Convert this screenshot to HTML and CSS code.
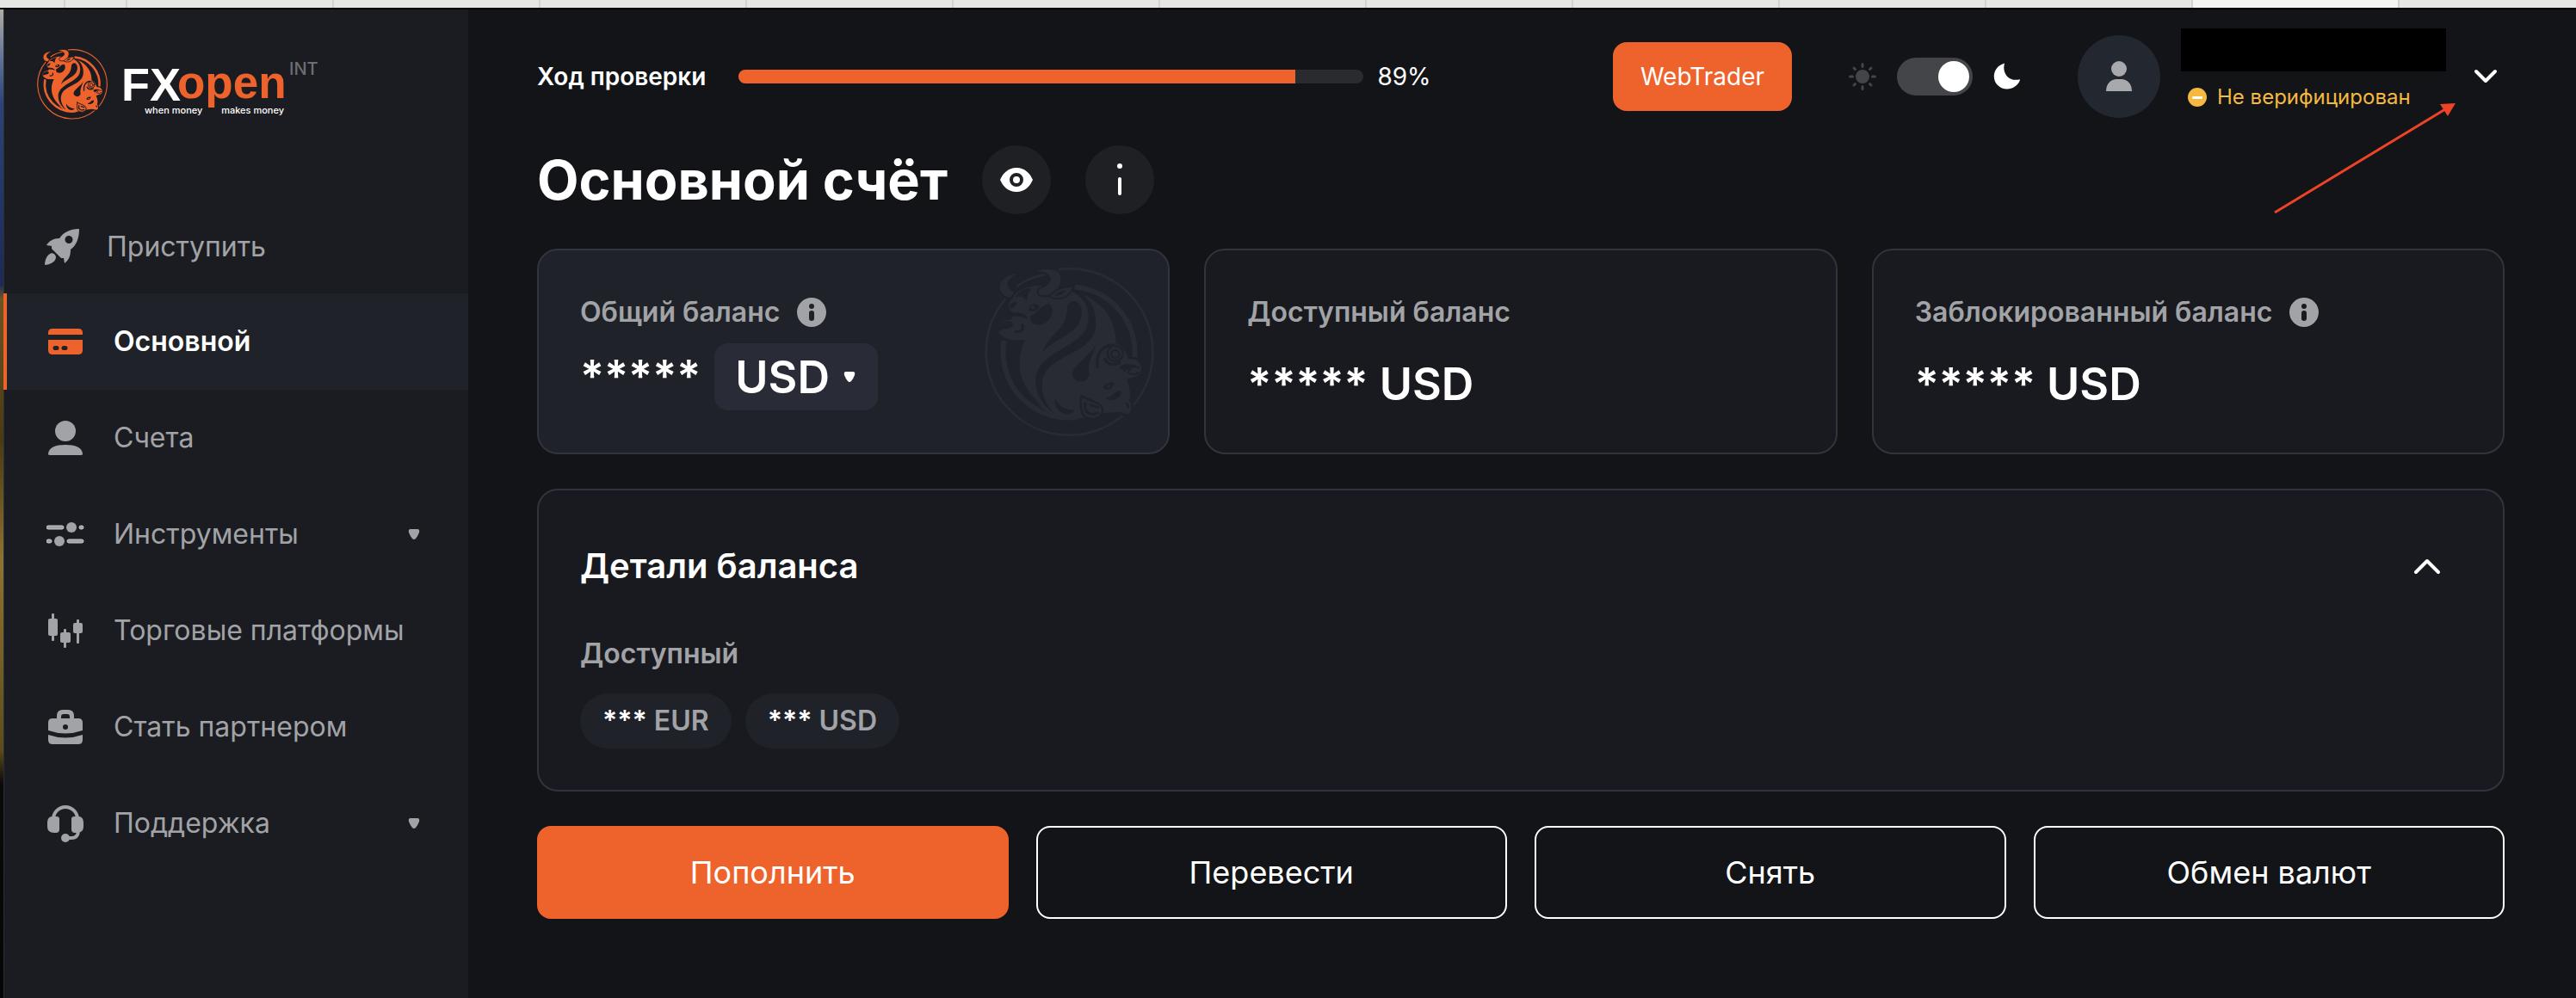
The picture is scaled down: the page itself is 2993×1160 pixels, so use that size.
FILE: index.html
```html
<!DOCTYPE html>
<html lang="ru">
<head>
<meta charset="utf-8">
<title>FXOpen — Основной счёт</title>
<meta name="viewport" content="width=device-width, initial-scale=1">
<link rel="stylesheet" href="styles.css">
</head>
<body>
<svg class="defs" aria-hidden="true">
  <symbol id="emblem" viewBox="75 92 590 592">
    <g class="line">
      <path d="M332 99A290 290 0 0 1 594 572M556 609A290 290 0 0 1 164 592A290 290 0 0 1 147 201M186 160Q230 122 312 112" stroke-width="8"/>
      <path d="M388 160A229 229 0 0 1 598 405M142 347A229 229 0 0 0 400 614" stroke-width="18"/>
    </g>
    <path class="ink" d="M168 205C185 160 260 145 330 162L425 190C495 222 535 285 532 356C560 365 570 400 578 412C612 405 628 440 618 460C608 478 575 474 570 486C580 505 588 540 578 556C592 575 588 602 572 603C555 602 548 594 535 596C510 600 492 598 484 604C470 624 440 624 425 616C380 628 320 618 285 590C190 520 165 420 215 345C180 352 145 345 125 322C112 295 135 275 165 274C175 262 175 256 176 250C150 240 155 215 168 205Z"/>
    <g class="cut">
      <path d="M275 388C300 320 362 310 362 235C366 198 410 200 413 245C414 325 320 335 275 388Z"/>
      <path d="M372 170C440 205 444 260 430 300C400 375 250 390 252 490C252 540 290 585 316 600C265 545 262 480 300 440C365 385 460 375 463 290C463 245 447 212 420 190Z"/>
      <path d="M215 345C184 410 184 500 275 574C165 530 152 420 160 347Z"/>
      <path d="M462 362C445 400 375 435 381 470C392 500 435 495 440 465C430 430 452 400 462 362Z"/>
      <path d="M234 262C262 250 270 222 300 220C325 235 305 295 258 292C235 290 232 275 234 262Z"/>
      <path d="M180 194C198 172 215 164 238 164C224 180 224 190 222 208C210 193 198 190 180 194Z"/>
      <path d="M122 302C132 276 172 272 174 290C170 310 140 300 122 316Z"/>
      <path d="M160 228C165 215 175 212 188 212C180 224 180 234 164 236Z"/>
      <path d="M165 252C190 246 220 252 224 272C205 262 190 262 165 262Z"/>
      <path d="M226 240C236 215 255 215 265 228C258 245 245 250 226 240Z"/>
      <path d="M320 550C335 580 360 588 388 590C380 612 322 612 319 556Z"/>
      <path d="M488 512C495 495 510 492 526 494C522 514 505 526 488 512Z"/>
      <path d="M500 546C525 545 525 522 548 522C560 540 530 562 500 552Z"/>
      <path d="M545 440C560 425 580 430 598 432C580 440 570 450 562 456Z"/>
      <path d="M566 566Q578 560 580 580Q574 590 566 566Z"/>
    </g>
    <g class="gap">
      <path d="M206 293Q214 318 182 316" stroke-width="9"/>
      <path d="M468 440C462 400 480 365 520 362M494 412C505 432 525 434 545 424" stroke-width="10"/>
      <path d="M412 540C445 560 482 560 487 592C478 630 425 628 414 600Q406 572 412 540Z" stroke-width="7"/>
      <path d="M426 565C418 595 440 612 468 600M445 573L470 580" stroke-width="9"/>
      <circle cx="530" cy="392" r="27" stroke-width="7"/>
      <circle cx="530" cy="394" r="14" stroke-width="6"/>
      <path d="M574 460Q590 425 612 442M582 462Q595 470 612 458" stroke-width="6"/>
    </g>
    <g class="horn">
      <path d="M202 112C140 106 112 150 130 180C142 196 158 200 168 198L180 176C148 168 142 132 202 112Z"/>
      <path d="M243 103C315 82 348 105 342 138C336 178 300 200 268 190C254 184 258 168 268 162C312 148 322 112 243 103Z"/>
      <path d="M300 194C318 166 350 160 386 156C372 192 345 212 300 194Z"/>
    </g>
    <path class="cut" d="M318 190Q335 172 358 170Q345 192 318 190Z"/>
    <circle class="ink" cx="243" cy="231" r="6"/>
    <circle class="ink" cx="507" cy="507" r="6"/>
  </symbol>
  <symbol id="caret" viewBox="0 0 18 18">
    <path fill="currentColor" d="M5 3h8q3 0 2 4q-2 5-4 7q-2 2-4 0q-2-2-4-7q-1-4 2-4z"/>
  </symbol>
  <symbol id="info" viewBox="0 0 34 34">
    <circle cx="17" cy="17" r="17" fill="currentColor"/>
    <circle class="cut" cx="17" cy="10" r="3"/>
    <rect class="cut" x="14" y="15" width="6" height="12" rx="3"/>
  </symbol>
</svg>

<div class="tabs" aria-hidden="true">
  <i class="tab tab--stub"></i><i class="tab tab--pin"></i><i class="tab"></i><i class="tab"></i><i class="tab"></i><i class="tab"></i><i class="tab"></i><i class="tab"></i><i class="tab"></i><i class="tab"></i><i class="tab"></i><i class="tab"></i><i class="tab tab--active"></i><i class="tab"></i>
</div>

<div class="app">
  <div class="desktop" aria-hidden="true"></div>

  <aside class="sidebar">
    <a class="logo" href="#" aria-label="FXOpen INT">
      <svg class="logo__emblem" aria-hidden="true"><use href="#emblem"/></svg>
      <svg class="logo__words" viewBox="0 0 232 82">
        <text class="logo__fx" x="-3" y="60">FX</text>
        <text class="logo__open" x="62" y="57">open</text>
        <text class="logo__tag" x="24" y="75">when money</text>
        <text class="logo__tag" x="186" y="75" text-anchor="end">makes money</text>
        <text class="logo__int" x="192" y="30">INT</text>
      </svg>
    </a>
    <nav class="nav">
      <a class="nav__item nav__item--start" href="#">
        <svg class="nav__icon" viewBox="0 0 44 44"><path fill="currentColor" fill-rule="evenodd" d="M42 1C31 1 24 5 19 12C12 12 7 15 4 20L10 21L10 24L21 35L24 35L25 41C30 37 32 33 32 25C39 20 42 12 42 1ZM30 9a4.500 4.500 0 1 1 0 9a4.500 4.500 0 0 1 0-9zM8 30C11 28 15 31 15 34C15 40 6 43 2 43C2 38 4 32 8 30Z"/></svg>
        <span>Приступить</span>
      </a>
      <a class="nav__item nav__item--active" href="#" aria-current="page">
        <svg class="nav__icon" viewBox="0 0 44 44"><path fill="currentColor" fill-rule="evenodd" d="M2 14V12Q2 7 7 7H37Q42 7 42 12V14ZM2 20H42V32Q42 37 37 37H7Q2 37 2 32ZM10 27a2.500 2.500 0 0 0 0 5h2a2.500 2.500 0 0 0 0-5zM20 27a2.500 2.500 0 0 0 0 5h2a2.500 2.500 0 0 0 0-5z"/></svg>
        <span>Основной</span>
      </a>
      <a class="nav__item" href="#">
        <svg class="nav__icon" viewBox="0 0 44 44"><g fill="currentColor"><circle cx="22" cy="14" r="12"/><path d="M2 41C2 33 11 30 22 30S42 33 42 41Q42 42 40 42H4Q2 42 2 41Z"/></g></svg>
        <span>Счета</span>
      </a>
      <a class="nav__item" href="#">
        <svg class="nav__icon" viewBox="0 0 44 44"><g fill="currentColor"><circle cx="29" cy="14" r="6"/><circle cx="15" cy="30" r="6"/></g><g fill="currentColor" stroke="#c6c7c9"><rect x="0" y="12" width="20" height="4" rx="2"/><rect x="38" y="12" width="5" height="4" rx="2"/><rect x="0" y="28" width="6" height="4" rx="2"/><rect x="24" y="28" width="19" height="4" rx="2"/></g></svg>
        <span>Инструменты</span>
        <svg class="nav__caret"><use href="#caret"/></svg>
      </a>
      <a class="nav__item" href="#">
        <svg class="nav__icon" viewBox="0 0 44 44"><g fill="currentColor"><rect x="2" y="8" width="11" height="20" rx="2"/><rect x="6" y="2" width="3" height="32" rx="1"/><rect x="16" y="24" width="12" height="12" rx="2"/><rect x="20" y="20" width="3" height="22" rx="1"/><rect x="31" y="13" width="11" height="12" rx="2"/><rect x="35" y="9" width="3" height="28" rx="1"/></g></svg>
        <span>Торговые платформы</span>
      </a>
      <a class="nav__item" href="#">
        <svg class="nav__icon" viewBox="0 0 44 44"><path fill="currentColor" fill-rule="evenodd" d="M12 12V9Q12 2 19 2H25Q32 2 32 9V12H37Q42 12 42 17V26Q22 33 2 26V17Q2 12 7 12ZM17 12H27V10Q27 7 24 7H20Q17 7 17 10ZM22 19a3 3 0 1 0 0 6a3 3 0 0 0 0-6zM2 31Q22 38 42 31V37Q42 42 37 42H7Q2 42 2 37Z"/></svg>
        <span>Стать партнером</span>
      </a>
      <a class="nav__item" href="#">
        <svg class="nav__icon" viewBox="0 0 44 44"><path d="M8 17A14 14 0 0 1 36 17M37 32Q36 39 29 39H24" fill="none" stroke="currentColor" stroke-width="4"/><g fill="currentColor"><path d="M6 14H12Q15 14 15 17V29Q15 33 11 33H9Q1 33 1 26V21Q1 15 6 14ZM38 14H32Q29 14 29 17V29Q29 33 33 33H35Q43 33 43 26V21Q43 15 38 14Z"/><circle cx="22" cy="39" r="5"/></g></svg>
        <span>Поддержка</span>
        <svg class="nav__caret"><use href="#caret"/></svg>
      </a>
    </nav>
  </aside>

  <main class="main">
    <header class="header">
      <span class="header__label" id="check">Ход проверки</span>
      <div class="progress" role="progressbar" aria-labelledby="check" aria-valuenow="89" aria-valuemin="0" aria-valuemax="100">
        <div class="progress__fill" style="width:89%"></div>
      </div>
      <span class="header__value">89%</span>
      <div class="tools">
        <button class="webtrader" type="button">WebTrader</button>
        <label class="theme">
          <svg class="theme__icon theme__icon--sun" viewBox="0 0 32 32" aria-hidden="true"><circle cx="16" cy="16" r="8" fill="currentColor"/><path d="M16 1.500v3M16 27.500v3M1.500 16h3M27.500 16h3M6 6l1.500 1.500M24.500 24.500L26 26M6 26l1.500-1.500M24.500 7.500L26 6" stroke="currentColor" stroke-width="3" stroke-linecap="round"/></svg>
          <input class="switch" type="checkbox" aria-label="Тёмная тема" checked>
          <svg class="theme__icon" viewBox="0 0 32 32" aria-hidden="true"><path fill="currentColor" d="M13 1C10 11 17 22 30 19.500Q31 19 31 20C27 31 13 34 5 26C-3 18 1 4 12 1Q13 0 13 1Z"/></svg>
        </label>
        <div class="avatar">
          <svg class="avatar__icon" viewBox="0 0 32 36" aria-hidden="true"><circle cx="16" cy="9" r="9" fill="currentColor"/><path fill="currentColor" d="M1 35C1 26 7 21 13 21H19C25 21 31 26 31 35Z"/></svg>
        </div>
        <div class="user">
          <div class="user__name"></div>
          <div class="user__status">
            <svg class="user__badge" viewBox="0 0 22 22" aria-hidden="true"><circle cx="11" cy="11" r="11" fill="currentColor"/><rect x="5" y="10" width="12" height="3" rx="1" fill="#fff"/></svg>
            <span>Не верифицирован</span>
          </div>
        </div>
        <button class="chevron" type="button" aria-label="Меню профиля">
          <svg class="chevron__icon" viewBox="0 0 32 32"><path d="M5 10L16 21L27 10"/></svg>
        </button>
      </div>
      <svg class="pointer" viewBox="0 0 216 132" aria-hidden="true"><path d="M4 129L202 9" stroke="currentColor" stroke-width="3"/><path fill="currentColor" d="M214 2L196 3L205 17Z"/></svg>
    </header>

    <div class="title">
      <h1 class="title__text">Основной счёт</h1>
      <button class="round" type="button" aria-label="Показать баланс">
        <svg class="round__icon" viewBox="0 0 40 40"><path fill="currentColor" fill-rule="evenodd" d="M20 6C30 6 36 13 39 20C36 27 30 34 20 34S4 27 1 20C4 13 10 6 20 6ZM20 12a8 8 0 1 0 0 16a8 8 0 0 0 0-16z"/><circle cx="20" cy="20" r="4" fill="currentColor"/></svg>
      </button>
      <button class="round" type="button" aria-label="Информация">
        <svg class="round__icon" viewBox="0 0 40 40"><circle cx="20" cy="4" r="3" fill="currentColor"/><rect x="18" y="17" width="4" height="21" rx="2" fill="currentColor"/></svg>
      </button>
    </div>

    <section class="cards">
      <article class="card card--total">
        <svg class="card__emblem" aria-hidden="true"><use href="#emblem"/></svg>
        <h2 class="card__label">Общий баланс <svg class="info"><use href="#info"/></svg></h2>
        <div class="amount">
          <span>*****</span>
          <span class="currency">
            <select class="currency__select" aria-label="Валюта"><option>USD</option></select>
            <svg class="currency__caret" aria-hidden="true"><use href="#caret"/></svg>
          </span>
        </div>
      </article>
      <article class="card">
        <h2 class="card__label">Доступный баланс</h2>
        <p class="amount amount--plain">***** USD</p>
      </article>
      <article class="card">
        <h2 class="card__label">Заблокированный баланс <svg class="info"><use href="#info"/></svg></h2>
        <p class="amount amount--plain">***** USD</p>
      </article>
    </section>

    <section class="panel">
      <div class="panel__head">
        <h2 class="panel__title">Детали баланса</h2>
        <button class="chevron" type="button" aria-label="Свернуть">
          <svg class="chevron__icon" viewBox="0 0 32 32"><path d="M3 23L16 10L29 23"/></svg>
        </button>
      </div>
      <h3 class="card__label">Доступный</h3>
      <div class="pills">
        <span class="pill"><b>***</b> EUR</span>
        <span class="pill"><b>***</b> USD</span>
      </div>
    </section>

    <div class="actions">
      <button class="action action--primary" type="button">Пополнить</button>
      <button class="action" type="button">Перевести</button>
      <button class="action" type="button">Снять</button>
      <button class="action" type="button">Обмен валют</button>
    </div>
  </main>
</div>
</body>
</html>
```
FILE: styles.css
```css
:root {
  --page: #131418;
  --side: #1b1c21;
  --card: #191a1f;
  --raised: #1f2229;
  --line: #30343e;
  --muted: #a2a3a6;
  --accent: #ee632c;
  --surface: var(--side);
}

* { box-sizing: border-box; }

body {
  margin: 0;
  min-height: 100vh;
  display: flex;
  flex-direction: column;
  background: var(--page);
  color: #fff;
  font-family: Inter, "Liberation Sans", sans-serif;
}

h1, h2, h3, p { margin: 0; }

button, select { font-family: inherit; color: inherit; cursor: pointer; }

a { color: inherit; text-decoration: none; }

.defs { position: absolute; width: 0; height: 0; }

/* Emblem inks */
.ink { fill: currentColor; }
.cut { fill: var(--surface); }
.line { fill: none; stroke: currentColor; }
.gap { fill: none; stroke: var(--surface); stroke-linecap: round; }
.horn { fill: currentColor; stroke: var(--surface); stroke-width: 6; }

/* Browser tab strip */
.tabs {
  display: flex;
  height: 11px;
  overflow: hidden;
  background: #e6e6e4;
  border-bottom: 2px solid #000;
}
.tab { flex: 0 0 240px; border-right: 2px solid #d2d2d0; }
.tab--stub { flex-basis: 76px; }
.tab--pin { flex-basis: 72px; }
.tab--active { background: #f4f4f2; }

.app {
  flex: 1;
  display: grid;
  grid-template-columns: 4px 540px 1fr;
}

.desktop {
  background: linear-gradient(#b0aca4 0, #5d6f95 60px, #2c4377 110px, #1c2a55 320px, #6b5521 336px, #4a3a14 500px, #8b7330 640px, #5e4c1d 860px, #0b0a08 900px, #060606 100%);
}

/* Sidebar */
.sidebar {
  padding-top: 46px;
  background: var(--side);
  border-left: 1px solid #2c2e35;
}
.logo { display: flex; gap: 19px; margin-left: 38px; }
.logo__emblem { width: 82px; height: 82px; color: var(--accent); }
.logo__words { width: 232px; height: 82px; overflow: visible; }
.logo__fx { font: 800 54px "Liberation Sans", sans-serif; fill: #fff; }
.logo__open { font: 800 53px "Liberation Sans", sans-serif; fill: var(--accent); }
.logo__tag { font: 500 11px Inter, sans-serif; fill: #fff; }
.logo__int { font: 500 20px Inter, sans-serif; fill: #6d6e72; }

.nav { margin-top: 94px; margin-left: -1px; }
.nav__item {
  display: flex;
  align-items: center;
  gap: 34px;
  height: 112px;
  padding: 0 54px 0 46px;
  border-left: 4px solid transparent;
  color: var(--muted);
  font-size: 32px;
  line-height: 40px;
}
.nav__item--start { height: 108px; padding-left: 42px; gap: 30px; }
.nav__item--active {
  background: var(--raised);
  border-left-color: var(--accent);
  color: #fff;
  font-weight: 600;
}
.nav__icon { width: 44px; height: 44px; }
.nav__item--active .nav__icon { color: var(--accent); }
.nav__caret { width: 18px; height: 18px; margin-left: auto; }

/* Main column */
.main { padding: 22px 83px 80px 80px; }

.header {
  position: relative;
  display: flex;
  align-items: center;
  height: 112px;
  font-size: 28px;
  line-height: 36px;
}
.header__label { font-weight: 600; white-space: nowrap; }
.progress {
  flex: 0 1 726px;
  height: 16px;
  margin: 0 16px 0 38px;
  border-radius: 8px;
  overflow: hidden;
  background: #2a2b2f;
}
.progress__fill { height: 100%; background: var(--accent); }

.tools { display: flex; align-items: center; margin-left: auto; }
.webtrader {
  width: 208px;
  height: 80px;
  padding: 0;
  border: 0;
  border-radius: 16px;
  background: var(--accent);
  font-size: 28px;
}
.theme { display: flex; align-items: center; gap: 24px; margin: 0 66px; }
.theme__icon { width: 32px; height: 32px; }
.theme__icon--sun { color: #444548; }
.switch {
  appearance: none;
  display: flex;
  justify-content: flex-end;
  width: 88px;
  height: 44px;
  margin: 0;
  padding: 4px;
  border-radius: 22px;
  background: #444548;
}
.switch::before { content: ""; width: 36px; border-radius: 50%; background: #fff; }
.avatar {
  display: grid;
  place-items: center;
  width: 96px;
  height: 96px;
  border-radius: 50%;
  background: #232730;
  color: #a8a9ac;
}
.avatar__icon { width: 32px; height: 36px; }
.user { width: 308px; margin: 0 24px; padding-bottom: 16px; }
.user__name { height: 50px; background: #000; }
.user__status {
  display: flex;
  align-items: center;
  gap: 12px;
  margin-top: 14px;
  padding-left: 8px;
  color: #f5b942;
  font-size: 24px;
  line-height: 32px;
  white-space: nowrap;
}
.user__badge { width: 22px; height: 22px; }
.chevron {
  display: grid;
  place-items: center;
  width: 44px;
  height: 44px;
  padding: 0;
  border: 0;
  background: none;
}
.chevron__icon {
  width: 32px;
  height: 32px;
  fill: none;
  stroke: currentColor;
  stroke-width: 4;
  stroke-linecap: round;
  stroke-linejoin: round;
}
.pointer {
  position: absolute;
  top: 85px;
  right: 55px;
  width: 216px;
  height: 132px;
  color: #ee4326;
  pointer-events: none;
}

.title { display: flex; align-items: center; gap: 40px; margin-top: 24px; }
.title__text { font-size: 63px; line-height: 80px; font-weight: 700; }
.round {
  display: grid;
  place-items: center;
  width: 80px;
  height: 80px;
  padding: 0;
  border: 0;
  border-radius: 50%;
  background: #1f2024;
}
.round__icon { width: 40px; height: 40px; }

/* Balance cards */
.cards {
  display: grid;
  grid-template-columns: repeat(3, 1fr);
  gap: 40px;
  margin-top: 40px;
}
.card {
  --surface: var(--card);
  position: relative;
  padding: 52px 48px 49px;
  border: 2px solid var(--line);
  border-radius: 24px;
  background: var(--surface);
}
.card--total { --surface: var(--raised); }
.card__emblem {
  position: absolute;
  top: 20px;
  right: 16px;
  width: 197px;
  height: 197px;
  color: #292b32;
}
.card__label {
  display: flex;
  align-items: center;
  gap: 20px;
  color: var(--muted);
  font-size: 32px;
  line-height: 40px;
  font-weight: 600;
}
.info { width: 34px; height: 34px; }
.amount {
  display: flex;
  align-items: center;
  gap: 16px;
  margin-top: 16px;
  font-size: 52px;
  line-height: 78px;
  font-weight: 600;
}
.amount--plain { margin-top: 34px; line-height: 60px; }
.currency { position: relative; display: flex; }
.currency__select {
  appearance: none;
  height: 78px;
  padding: 0 56px 0 24px;
  border: 0;
  border-radius: 16px;
  background: #292c36;
  font-size: 52px;
  font-weight: 600;
}
.currency__caret {
  position: absolute;
  top: 30px;
  right: 24px;
  width: 18px;
  height: 18px;
  pointer-events: none;
}

/* Balance details */
.panel {
  margin-top: 40px;
  padding: 60px 48px 48px;
  border: 2px solid var(--line);
  border-radius: 24px;
  background: var(--card);
}
.panel__head {
  display: flex;
  align-items: center;
  justify-content: space-between;
  margin-bottom: 54px;
  padding-right: 18px;
}
.panel__title { font-size: 40px; line-height: 56px; font-weight: 600; }
.pills { display: flex; gap: 16px; margin-top: 26px; }
.pill {
  padding: 0 26px;
  border-radius: 32px;
  background: var(--raised);
  color: var(--muted);
  font-size: 32px;
  line-height: 64px;
  font-weight: 600;
}
.pill b { color: #fff; font-weight: inherit; }

.actions {
  display: grid;
  grid-template-columns: repeat(4, 1fr);
  gap: 32px;
  margin-top: 40px;
}
.action {
  height: 108px;
  border: 2px solid #fff;
  border-radius: 16px;
  background: none;
  font-size: 36px;
}
.action--primary { border-color: var(--accent); background: var(--accent); }
```
